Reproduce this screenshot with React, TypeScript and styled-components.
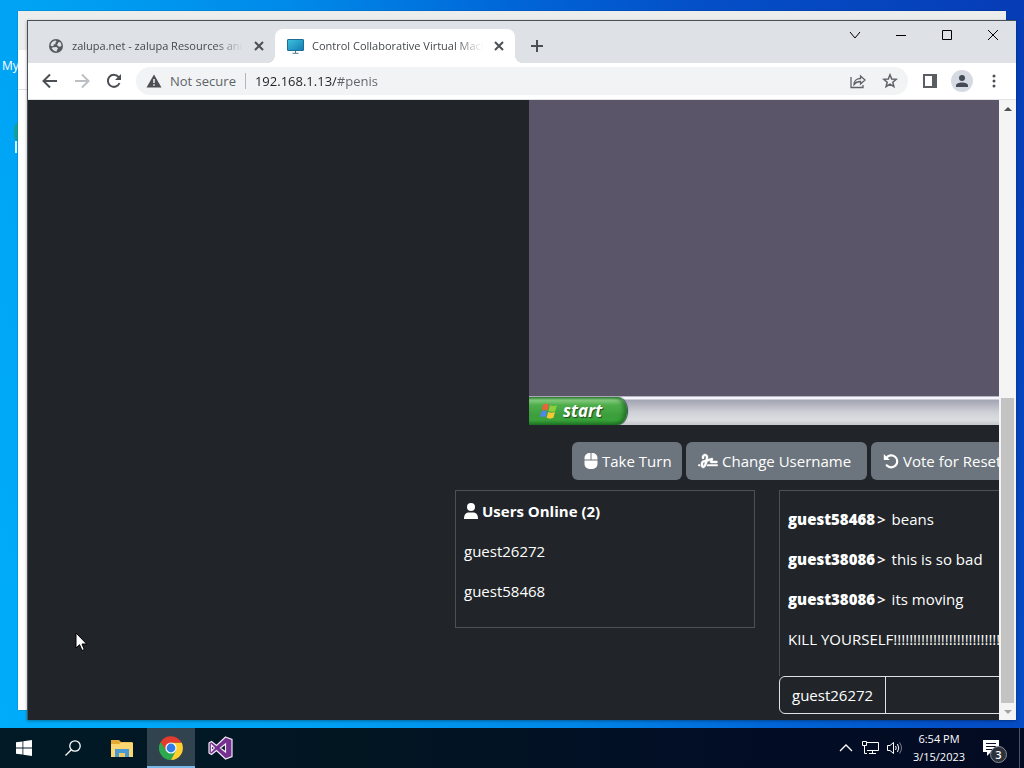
import React from "react";
import styled, { createGlobalStyle, css } from "styled-components";

const GlobalStyle = createGlobalStyle`
  * { box-sizing: border-box; }
  html, body, #root { height: 100%; }
  body {
    margin: 0;
    overflow: hidden;
    font-family: "Open Sans", "Noto Sans", sans-serif;
  }
  button, input { font: inherit; color: inherit; border: 0; padding: 0; margin: 0; background: none; }
  button { cursor: default; }
  p, h2 { margin: 0; }
  svg { display: block; flex: none; }
`;

const Screen = styled.div`
  height: 100%;
  display: flex;
  flex-direction: column;
`;

const Desktop = styled.main`
  flex: 1;
  min-height: 0;
  position: relative;
  overflow: hidden;
  background: linear-gradient(70deg, #00adfa 0%, #00a2f4 24%, #0088e8 44%, #0066d8 60%, #0450c8 74%, #063cb6 100%);
`;

const DesktopIcon = styled.div<{ $top: number }>`
  position: absolute;
  left: 2px;
  top: ${(p) => p.$top}px;
  color: #fff;
  font-size: 12px;
  line-height: 16px;
  white-space: nowrap;
`;

const IconSliver = styled.div`
  position: absolute;
  left: 14px;
  top: 122px;
  width: 6px;
  height: 20px;
  border-radius: 6px 0 0 6px;
  background: #12a09c;
`;

const LabelSliver = styled.div`
  position: absolute;
  left: 15px;
  top: 141px;
  width: 2px;
  height: 12px;
  background: #d8f0ff;
`;

const BackWindow = styled.section`
  position: absolute;
  inset: 11px 18px 18px 18px;
  background: linear-gradient(#eceeee 0 39px, #fff 39px 78px, #dfe3e6 78px 79px, #fff 79px);
  box-shadow: 0 0 1px rgba(0, 0, 0, 0.5);
`;

const Window = styled.section`
  position: absolute;
  inset: 20px 8px 8px 27px;
  display: flex;
  flex-direction: column;
  border-top: 1px solid #4a5058;
  border-left: 1px solid #4a5058;
  background: #fff;
  box-shadow: 0 1px 3px rgba(0, 0, 0, 0.35);
`;

const TabStrip = styled.header`
  flex: none;
  height: 42px;
  display: flex;
  align-items: flex-end;
  padding-left: 7px;
  background: #dee1e6;
`;

const Tab = styled.div<{ $active?: boolean }>`
  position: relative;
  width: 240px;
  height: 34px;
  display: flex;
  align-items: center;
  gap: 8px;
  padding: 0 8px 0 12px;
  border-radius: 8px 8px 0 0;
  color: #45494d;
  ${(p) =>
    p.$active &&
    css`
      background: #fff;
      &::before,
      &::after {
        content: "";
        position: absolute;
        bottom: 0;
        width: 8px;
        height: 8px;
      }
      &::before {
        left: -8px;
        background: radial-gradient(circle at 0 0, transparent 8px, #fff 8px);
      }
      &::after {
        right: -8px;
        background: radial-gradient(circle at 100% 0, transparent 8px, #fff 8px);
      }
    `}
`;

const TabTitle = styled.span`
  flex: 1;
  overflow: hidden;
  white-space: nowrap;
  font-size: 11px;
  line-height: 16px;
  mask-image: linear-gradient(to right, #000 calc(100% - 28px), transparent);
`;

const IconButton = styled.button<{ $w?: number; $h?: number; $tint?: string }>`
  flex: none;
  width: ${(p) => p.$w ?? 28}px;
  height: ${(p) => p.$h ?? 28}px;
  display: flex;
  align-items: center;
  justify-content: center;
  border-radius: ${(p) => (p.$tint ? 50 : 0)}%;
  background: ${(p) => p.$tint ?? "transparent"};
  color: #4c5054;
`;

const NewTab = styled(IconButton)`
  margin: 0 auto 3px 8px;
`;

const WindowControls = styled.div`
  align-self: flex-start;
  display: flex;
`;

const Toolbar = styled.nav`
  flex: none;
  height: 37px;
  display: flex;
  align-items: center;
  padding: 0 8px;
  border-bottom: 1px solid #e2e4e6;
`;

const NavButtons = styled.div`
  display: flex;
  gap: 4px;
`;

const AddressBar = styled.form`
  flex: 1;
  height: 28px;
  display: flex;
  align-items: center;
  margin: 0 8px;
  padding: 0 4px 0 10px;
  border-radius: 14px;
  background: #f1f3f4;
  color: #5f6368;
  font-size: 13px;
  line-height: 20px;
`;

const Security = styled.label`
  display: flex;
  align-items: center;
  gap: 8px;
  padding-right: 9px;
  border-right: 1px solid #b4b8bc;
  line-height: 16px;
`;

const Address = styled.input`
  flex: 1;
  min-width: 0;
  height: 20px;
  margin-left: 9px;
  color: transparent;
  background: linear-gradient(to right, #202124 81px, #5f6368 81px);
  background-clip: text;
  outline: 0;
`;

const PageActions = styled.div`
  display: flex;
  gap: 4px;
`;

const BrowserActions = styled.div`
  display: flex;
  align-items: center;
  gap: 7px;
`;

const Viewport = styled.div`
  flex: 1;
  min-height: 0;
  display: flex;
`;

const Page = styled.div`
  flex: 1;
  min-width: 0;
  overflow: hidden;
  display: flex;
  flex-direction: column;
  padding: 0 0 6px 427px;
  background: #212529;
  color: #fff;
  font-size: 15px;
  line-height: 24px;
`;

const Remote = styled.div`
  flex: 1;
  min-height: 0;
  margin-left: 74px;
  display: flex;
  flex-direction: column;
  background: #5a5568;
`;

const RemoteBar = styled.div`
  margin-top: auto;
  height: 29px;
  padding-top: 1px;
  background: linear-gradient(#77748a 0, #f4f4fa 1px, #f4f4fa 3px, #a4a5b4 4px, #b4b5c0 9px, #cfd0d6 16px, #dcdde1 24px, #c9cacf 28px);
`;

const StartButton = styled.button`
  width: 98px;
  height: 28px;
  display: flex;
  align-items: center;
  gap: 4px;
  padding-left: 10px;
  border-radius: 0 10px 10px 0 / 0 14px 14px 0;
  background: linear-gradient(#3a8a3a 0, #86cc80 3px, #4fae4c 8px, #3c9e3c 18px, #3aa23a 23px, #247c28 28px);
  box-shadow: inset -3px 0 4px rgba(10, 80, 20, 0.6), 1px 0 1px #345;
  color: #fff;
  font: italic bold 17px/24px "Open Sans", sans-serif;
  text-shadow: 1px 1px 1px #1c4a1c;
`;

const Actions = styled.div`
  flex: none;
  display: flex;
  gap: 4px;
  margin: 17px 0 10px 117px;
`;

const ActionButton = styled.button<{ $w: number }>`
  flex: none;
  width: ${(p) => p.$w}px;
  height: 38px;
  display: flex;
  align-items: center;
  padding-left: 12px;
  gap: 4px;
  border-radius: 6px;
  background: #6c757d;
  white-space: nowrap;
`;

const Panels = styled.div`
  flex: none;
  display: flex;
  align-items: flex-start;
  gap: 24px;
`;

const Users = styled.section`
  flex: none;
  width: 300px;
  height: 138px;
  padding: 8px;
  border: 1px solid #4d5154;
`;

const UsersTitle = styled.h2`
  display: flex;
  align-items: center;
  gap: 4px;
  font-size: 15px;
  line-height: 24px;
`;

const Line = styled.p`
  margin-top: 16px;
  white-space: nowrap;
`;

const Author = styled.span`
  margin-right: 6px;
  font-weight: 600;

  b {
    margin-right: 2px;
    font-weight: 800;
  }
`;

const Chat = styled.section`
  flex: none;
  width: 500px;
`;

const Messages = styled.div`
  height: 186px;
  padding: 0 8px;
  border: 1px solid #4d5154;
  border-bottom: 0;
`;

const Composer = styled.form`
  display: flex;
  height: 38px;
  border: 1px solid #dfe2e5;
  border-radius: 6px;
`;

const ComposerName = styled.label`
  padding: 6px 12px;
  border-right: 1px solid #dfe2e5;
`;

const ComposerInput = styled.input`
  flex: 1;
  padding: 0 12px;
  outline: 0;
`;

const Scrollbar = styled.div`
  flex: none;
  width: 17px;
  display: flex;
  flex-direction: column;
  background: #f4f4f4;
`;

const Track = styled.div`
  flex: 1;
  display: flex;
  flex-direction: column;
  justify-content: flex-end;
  padding: 0 2px;
`;

const Thumb = styled.div`
  height: 52%;
  background: #c3c3c3;
`;

const Cursor = styled.svg`
  position: absolute;
  left: 75px;
  top: 632px;
`;

const Taskbar = styled.footer`
  flex: none;
  height: 40px;
  display: flex;
  gap: 1px;
  background: linear-gradient(90deg, #011a26 0%, #021622 35%, #020e26 70%, #030b22 100%);
  color: #fff;
`;

const TaskButton = styled.button<{ $active?: boolean }>`
  width: 48px;
  height: 40px;
  display: flex;
  align-items: center;
  justify-content: center;
  background: ${(p) => (p.$active ? "#30434e" : "transparent")};
  box-shadow: ${(p) => (p.$active ? "inset 0 -2px #7ab8ea" : "none")};
`;

const Tray = styled.div`
  margin-left: auto;
  display: flex;
  align-items: center;
`;

const TrayButton = styled.button`
  width: 24px;
  height: 40px;
  display: flex;
  align-items: center;
  justify-content: center;
`;

const Clock = styled.div`
  width: 66px;
  text-align: center;
  font-size: 11px;
  line-height: 18px;
  white-space: nowrap;
`;

const Notices = styled.button`
  position: relative;
  width: 47px;
  height: 40px;
  padding-left: 11px;
`;

const Badge = styled.span`
  position: absolute;
  left: 18px;
  top: 18px;
  width: 17px;
  height: 17px;
  border: 1px solid #8a8f98;
  border-radius: 50%;
  background: #2c323c;
  font-size: 11px;
  font-weight: 600;
  line-height: 15px;
  text-align: center;
`;

const ShowDesktop = styled.button`
  width: 5px;
  height: 40px;
  border-left: 1px solid #4a5262;
`;

const Stroke = ({ d, size = 16, w = 2, color = "currentColor" }: { d: string; size?: number; w?: number; color?: string }) => (
  <svg width={size} height={size} viewBox="0 0 16 16" fill="none" stroke={color} strokeWidth={w} aria-hidden="true">
    <path d={d} />
  </svg>
);

const Globe = () => (
  <svg width="17" height="16" viewBox="0 0 17 16" aria-hidden="true">
    <circle cx="9" cy="8" r="7" fill="#565a5e" />
    <path d="M3.500 7.500C3.800 4.800 6 2.700 8.600 2.600L9.600 3.600 8.300 4.800 8.600 6 6.600 6.600 6.800 7.800 5 8.300ZM6 9.200l3.500-.2 1.600 1.600-1.200 1.300-.2 1.500C7.500 13.400 5.500 12 4.500 10ZM11.500 4.200l1.500-.2c1 1 1.500 2.400 1.400 4l-1.500.8-2.200-.7-.6-1.300Z" fill="#dee1e6" />
  </svg>
);

const Monitor = () => (
  <svg width="17" height="16" viewBox="0 0 17 16" aria-hidden="true">
    <defs>
      <linearGradient id="screen" x1="0" y1="0" x2="1" y2="1">
        <stop offset="0" stopColor="#3cc3dc" />
        <stop offset="1" stopColor="#147bb4" />
      </linearGradient>
    </defs>
    <rect x="0.5" y="1.5" width="16" height="11" rx="0.5" fill="url(#screen)" stroke="#1b6e96" />
    <path d="M8.500 13v2M5.500 15.300h6" stroke="#55798c" />
  </svg>
);

const Mouse = () => (
  <svg width="14" height="16" viewBox="0 0 14 16" fill="#fff" aria-hidden="true">
    <path d="M.5 6.500V5A5 5 0 0 1 5.500 0H6.500V6.500ZM7.500 0H8.500A5 5 0 0 1 13.500 5V6.500H7.500ZM.5 7.500H13.500V11A5 5 0 0 1 8.500 16H5.500A5 5 0 0 1 .5 11Z" />
  </svg>
);

const Signature = () => (
  <svg width="20" height="16" viewBox="0 0 640 512" fill="#fff" stroke="#fff" strokeWidth="14" aria-hidden="true">
    <path d="M192 128c0-17.700 14.300-32 32-32s32 14.300 32 32v7.800c0 27.700-2.400 55.300-7.100 82.500l-84.400 25.300c-40.600 12.200-68.400 49.600-68.400 92v71.900c0 40 32.500 72.500 72.500 72.500 26 0 50-13.900 62.900-36.500l13.900-24.300c26.800-47 46.500-97.700 58.400-150.500l94.400-28.300-12.500 37.500c-3.300 9.800-1.600 20.500 4.400 28.800S405.700 320 416 320H592c17.700 0 32-14.300 32-32s-14.300-32-32-32H460.400l18-53.900c3.800-11.300 .9-23.800-7.400-32.400s-20.700-11.800-32.200-8.400L316.400 198.100c2.400-20.700 3.600-41.400 3.600-62.300V128c0-53-43-96-96-96s-96 43-96 96v32c0 17.700 14.300 32 32 32s32-14.300 32-32V128zm-9.200 177l49-14.700c-10.400 33.800-24.500 66.400-42.100 97.200l-13.900 24.300c-1.500 2.600-4.300 4.300-7.400 4.300-4.700 0-8.500-3.800-8.500-8.500V335.600c0-14.100 9.300-26.600 22.800-30.700zM24 368c-13.300 0-24 10.700-24 24s10.700 24 24 24H64.300c-.2-2.800-.3-5.600-.3-8.500V368H24zm592 48c13.300 0 24-10.700 24-24s-10.700-24-24-24H305.900c-6.700 16.300-14.200 32.300-22.300 48H616z" />
  </svg>
);

const Rotate = () => (
  <svg width="16" height="16" viewBox="0 0 16 16" fill="none" stroke="#fff" strokeWidth="2.200" aria-hidden="true">
    <path d="M3.300 5A6 6 0 1 1 3.700 12.300" strokeLinecap="round" />
    <path d="M.8 1V7H6.800Z" fill="#fff" stroke="none" />
  </svg>
);

const Person = () => (
  <svg width="14" height="16" viewBox="0 0 14 16" fill="#fff" aria-hidden="true">
    <circle cx="7" cy="4" r="4" />
    <path d="M0 16C0 11 2 9.500 5.500 9.500h3C12 9.500 14 11 14 16Z" />
  </svg>
);

const XpFlag = () => (
  <svg width="20" height="20" viewBox="0 0 19 18" aria-hidden="true">
    <path d="M4 3Q7 1 9.500 3L8 8.500Q5.500 7 2.500 8.500Z" fill="#e8633a" />
    <path d="M10.500 3.500Q13.500 5 17 3.500L15.500 9Q12 10.500 9 9Z" fill="#8ccf3e" />
    <path d="M2.200 9.500Q5 8 7.700 9.500L6.200 15Q3.500 13.500.7 15Z" fill="#4f86e8" />
    <path d="M8.700 10Q11.500 11.500 15.200 10L13.700 15.500Q10.500 17 7.200 15.500Z" fill="#f6c934" />
  </svg>
);

const WindowsLogo = () => (
  <svg width="16" height="16" viewBox="0 0 16 16" fill="#fff" aria-hidden="true">
    <path d="M0 2.300 6.500 1.400V7.600H0ZM7.300 1.300 16 0V7.600H7.300ZM0 8.400H6.500V14.600L0 13.700ZM7.300 8.400H16V16L7.300 14.700Z" />
  </svg>
);

const Folder = () => (
  <svg width="22" height="19" viewBox="0 0 22 19" aria-hidden="true">
    <path d="M0 1H8L10 3H21V18H0Z" fill="#e5a936" />
    <path d="M0 5H8L10 3.500H22V18H0Z" fill="#fbd771" />
    <path d="M4 10H18V18H14V14H8V18H4Z" fill="#4a98d4" />
    <path d="M8 14h6v4H8Z" fill="#f2cb60" />
  </svg>
);

const Chrome = () => (
  <svg width="24" height="24" viewBox="0 0 24 24" aria-hidden="true">
    <path d="M12 12 1.600 6A12 12 0 0 0 12 24L17.200 15Z" fill="#2da94f" />
    <path d="M12 6.500H22.600A12 12 0 0 1 12 24L17 14.500Z" fill="#fdd02f" />
    <path d="M12 6.500H22.500A12 12 0 0 0 1.600 6L7 14.500Z" fill="#e33b2e" />
    <circle cx="12" cy="12" r="5.600" fill="#fff" />
    <circle cx="12" cy="12" r="4.400" fill="#2f7de9" />
  </svg>
);

const VisualStudio = () => (
  <svg width="25" height="24" viewBox="0 0 25 24" aria-hidden="true">
    <path fillRule="evenodd" d="M17.500 1 24 3.500V20.500L17.500 23 8.500 14.500 3.500 18.500 1 17V7L3.500 5.500 8.500 9.500ZM17.500 8 12.500 12 17.500 16ZM3.500 9V15L6.300 12Z" fill="#75318f" stroke="#f4ebf7" strokeWidth="1.200" />
  </svg>
);

const messages = [
  { user: "guest58468", text: "beans" },
  { user: "guest38086", text: "this is so bad" },
  { user: "guest38086", text: "its moving" },
  { text: "KILL YOURSELF!!!!!!!!!!!!!!!!!!!!!!!!!!!!!!" },
];

export default function App() {
  return (
    <Screen>
      <GlobalStyle />
      <Desktop>
        <DesktopIcon $top={58}>My</DesktopIcon>
        <IconSliver />
        <LabelSliver />
        <BackWindow />
        <Window>
          <TabStrip>
            <Tab>
              <Globe />
              <TabTitle>zalupa.net - zalupa Resources and Information</TabTitle>
              <IconButton $w={16} $h={16} aria-label="Close tab"><Stroke d="M4 4l8 8M12 4l-8 8" /></IconButton>
            </Tab>
            <Tab $active>
              <Monitor />
              <TabTitle>Control Collaborative Virtual Machines</TabTitle>
              <IconButton $w={16} $h={16} aria-label="Close tab"><Stroke d="M4 4l8 8M12 4l-8 8" /></IconButton>
            </Tab>
            <NewTab aria-label="New tab"><Stroke d="M8 2v12M2 8h12" /></NewTab>
            <WindowControls>
              <IconButton $w={46} aria-label="Search tabs"><Stroke w={1} color="#000" d="M3 5l5 6 5-6" /></IconButton>
              <IconButton $w={46} aria-label="Minimize"><Stroke w={1} color="#000" d="M3 8.500h10" /></IconButton>
              <IconButton $w={46} aria-label="Maximize"><Stroke w={1} color="#000" d="M3.500 3.500h9v9h-9z" /></IconButton>
              <IconButton $w={46} aria-label="Close"><Stroke w={1} color="#000" d="M3 3l10 10M13 3L3 13" /></IconButton>
            </WindowControls>
          </TabStrip>
          <Toolbar>
            <NavButtons>
              <IconButton aria-label="Back"><Stroke d="M15 8H2M8 1.500 1.500 8 8 14.500" /></IconButton>
              <IconButton aria-label="Forward"><Stroke color="#bcc0c4" d="M1 8h13M8 1.500 14.500 8 8 14.500" /></IconButton>
              <IconButton aria-label="Reload">
                <svg width="16" height="16" viewBox="0 0 16 16" aria-hidden="true">
                  <path d="M13.500 10A6 6 0 1 1 12.500 4" fill="none" stroke="#4c5054" strokeWidth="2" />
                  <path d="M15 1V7H9Z" fill="#4c5054" />
                </svg>
              </IconButton>
            </NavButtons>
            <AddressBar onSubmit={(e) => e.preventDefault()}>
              <Security htmlFor="address">
                <svg width="16" height="16" viewBox="0 0 16 16" aria-hidden="true">
                  <path d="M8 1.500 15.500 14.500H.5Z" fill="#4c5054" />
                  <path d="M8 6v4M8 11.200v1.600" stroke="#f1f3f4" strokeWidth="1.500" />
                </svg>
                Not secure
              </Security>
              <Address id="address" defaultValue="192.168.1.13/#penis" />
              <PageActions>
                <IconButton type="button" aria-label="Share"><Stroke w={1.3} color="#5f6368" d="M1 4V14.500H13V12M4 11.500C4 8 6.500 5.500 10.500 5.500V3L15 7 10.500 11V8.500C7.500 8.500 5.500 9.500 4 11.500Z" /></IconButton>
                <IconButton type="button" aria-label="Bookmark"><Stroke w={1.5} color="#5f6368" d="M8 1.800 9.700 6 14.200 6.300 10.800 9.200 11.900 13.600 8 11.200 4.100 13.600 5.200 9.200 1.800 6.300 6.300 6Z" /></IconButton>
              </PageActions>
            </AddressBar>
            <BrowserActions>
              <IconButton aria-label="Side panel">
                <svg width="14" height="14" viewBox="0 0 14 14" aria-hidden="true">
                  <path fillRule="evenodd" d="M0 0H14V14H0ZM2 2V12H9V2Z" fill="#5a5e62" />
                </svg>
              </IconButton>
              <IconButton $w={22} $h={22} $tint="#d6dae3" aria-label="Profile">
                <svg width="14" height="14" viewBox="0 0 14 14" fill="#454a58" aria-hidden="true">
                  <circle cx="7" cy="4" r="3" />
                  <path d="M1 13V11.500C1 9.500 4 8.500 7 8.500s6 1 6 3V13Z" />
                </svg>
              </IconButton>
              <IconButton aria-label="Menu">
                <svg width="4" height="14" viewBox="0 0 4 14" fill="#4c5054" aria-hidden="true">
                  <circle cx="2" cy="2" r="1.500" /><circle cx="2" cy="7" r="1.500" /><circle cx="2" cy="12" r="1.500" />
                </svg>
              </IconButton>
            </BrowserActions>
          </Toolbar>
          <Viewport>
            <Page>
              <Remote>
                <RemoteBar>
                  <StartButton><XpFlag />start</StartButton>
                </RemoteBar>
              </Remote>
              <Actions>
                <ActionButton $w={110}><Mouse />Take Turn</ActionButton>
                <ActionButton $w={181}><Signature />Change Username</ActionButton>
                <ActionButton $w={150}><Rotate />Vote for Reset</ActionButton>
              </Actions>
              <Panels>
                <Users>
                  <UsersTitle><Person />Users Online (2)</UsersTitle>
                  <Line>guest26272</Line>
                  <Line>guest58468</Line>
                </Users>
                <Chat>
                  <Messages>
                    {messages.map((m, i) => (
                      <Line key={i}>
                        {m.user && <Author><b>{m.user}</b>&gt;</Author>}
                        {m.text}
                      </Line>
                    ))}
                  </Messages>
                  <Composer onSubmit={(e) => e.preventDefault()}>
                    <ComposerName htmlFor="message">guest26272</ComposerName>
                    <ComposerInput id="message" />
                  </Composer>
                </Chat>
              </Panels>
            </Page>
            <Scrollbar>
              <IconButton $w={17} $h={17} aria-label="Scroll up">
                <svg width="8" height="4" viewBox="0 0 8 4"><path d="M0 4 4 0 8 4Z" fill="#4f4f4f" /></svg>
              </IconButton>
              <Track><Thumb /></Track>
              <IconButton $w={17} $h={17} aria-label="Scroll down">
                <svg width="8" height="4" viewBox="0 0 8 4"><path d="M0 0 4 4 8 0Z" fill="#a3a3a3" /></svg>
              </IconButton>
            </Scrollbar>
          </Viewport>
        </Window>
        <Cursor width="13" height="20" viewBox="0 0 13 20" aria-hidden="true">
          <path d="M1 1V16L4.500 12.700 7 18.500 9.300 17.500 7 12H11.700Z" fill="#fff" stroke="#000" strokeWidth="1" />
        </Cursor>
      </Desktop>
      <Taskbar>
        <TaskButton aria-label="Start"><WindowsLogo /></TaskButton>
        <TaskButton aria-label="Search">
          <svg width="16" height="16" viewBox="0 0 16 16" fill="none" stroke="#fff" strokeWidth="1.300" aria-hidden="true">
            <circle cx="10" cy="6" r="5.200" /><path d="M6.300 9.700.5 15.500" />
          </svg>
        </TaskButton>
        <TaskButton aria-label="File Explorer"><Folder /></TaskButton>
        <TaskButton $active aria-label="Chrome"><Chrome /></TaskButton>
        <TaskButton aria-label="Visual Studio"><VisualStudio /></TaskButton>
        <Tray>
          <TrayButton aria-label="Hidden icons"><Stroke w={1.3} d="M2 11l6-6 6 6" /></TrayButton>
          <TrayButton aria-label="Network">
            <svg width="17" height="16" viewBox="0 0 17 16" fill="none" stroke="#fff" aria-hidden="true">
              <path d="M5 2.500H16.500V10.500H5M10.500 10.500V13.500M7 13.500h7M.5 1.500h4v4h-4zM2.500 5.500V13.500H5" />
            </svg>
          </TrayButton>
          <TrayButton aria-label="Volume">
            <svg width="17" height="16" viewBox="0 0 17 16" fill="none" stroke="#fff" aria-hidden="true">
              <path d="M1.500 5.500H4L7.500 2.500V13.500L4 10.500H1.500ZM9.500 6Q11 8 9.500 10M11.500 4Q14 8 11.500 12" />
              <path d="M13.500 2.500Q17.500 8 13.500 13.500" stroke="#7a8290" />
            </svg>
          </TrayButton>
          <Clock>6:54 PM<br />3/15/2023</Clock>
          <Notices aria-label="Notifications">
            <svg width="16" height="16" viewBox="0 0 16 16" aria-hidden="true">
              <path d="M0 0H16V12H8L4 16V12H0Z" fill="#fff" />
              <path d="M3 3.500h10M3 6.500h10M3 9.500h6" stroke="#0a1228" />
            </svg>
            <Badge>3</Badge>
          </Notices>
          <ShowDesktop aria-label="Show desktop" />
        </Tray>
      </Taskbar>
    </Screen>
  );
}
